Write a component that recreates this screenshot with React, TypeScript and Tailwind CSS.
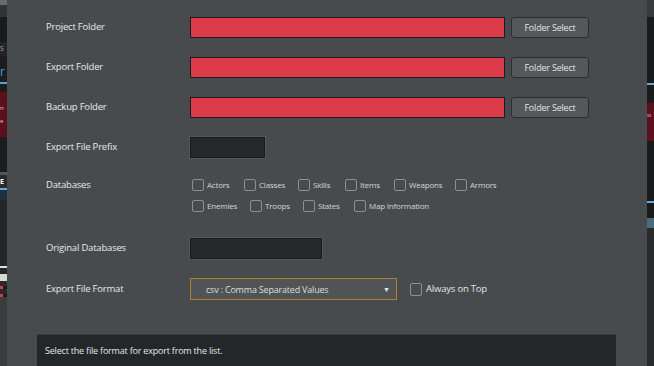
import React from "react";

const font = { fontFamily: '"Open Sans", "Noto Sans", sans-serif' };

function Checkbox({ label, w }: { label: string; w: string }) {
  return (
    <div className={`flex items-center ${w}`}>
      <span className="w-[12px] h-[12px] rounded-[2px] border border-[#8d9093] shrink-0" />
      <span className="ml-[3px] text-[8px] leading-none text-[#d4d4d4] tracking-[-0.2px]">{label}</span>
    </div>
  );
}

function Label({ children }: { children: React.ReactNode }) {
  return <div className="w-[144px] shrink-0 text-[9.5px] leading-[14px] text-[#e8e8e8] tracking-[-0.2px]">{children}</div>;
}

function FolderRow({ label }: { label: string }) {
  return (
    <div className="h-[40px] flex items-center">
      <Label>{label}</Label>
      <div className="w-[315px] h-[21px] bg-[#dd3a4a] border border-[#1c1c1c]" />
      <button className="ml-[6px] w-[78px] h-[21px] rounded-[3px] bg-[#55585b] border border-[#2a2c2e] text-[9px] text-[#e2e2e2] tracking-[-0.2px] leading-none">
        Folder Select
      </button>
    </div>
  );
}

export default function App() {
  return (
    <div className="w-[654px] h-[366px] flex overflow-hidden bg-[#1b1b1b]" style={font}>
      {/* left background strip */}
      <div className="w-[7px] shrink-0 flex flex-col bg-[#1c1c1c] overflow-hidden">
        <div className="h-[5px] bg-[#6b6b6b]" />
        <div className="h-[12px] bg-[#333]" />
        <div className="h-[25px] bg-[#1a1a1a]" />
        <div className="h-[14px] bg-[#242424] text-[7px] leading-[14px] text-[#aaa]">S</div>
        <div className="h-[6px] bg-[#1c1c1c]" />
        <div className="h-[20px] bg-[#1c1c1c] text-[12px] leading-[20px] text-[#3aa0e8]">r</div>
        <div className="h-[2px] bg-[#5a9fd0]" />
        <div className="h-[8px] bg-[#1c1c1c]" />
        <div className="h-[45px] bg-[#5c0f1c] text-[6px] leading-[13px] text-[#e0c8c8] pt-[10px]">n<br />e</div>
        <div className="h-[35px] bg-[#1c1c1c]" />
        <div className="h-[3px] bg-[#555]" />
        <div className="h-[13px] bg-[#2a2a2a] text-[7px] leading-[13px] text-white font-bold">E</div>
        <div className="h-[2px] bg-[#6aa8d8]" />
        <div className="h-[10px] bg-[#203040]" />
        <div className="h-[66px] bg-[#262626]" />
        <div className="h-[2px] bg-[#ddd]" />
        <div className="h-[6px] bg-[#262626]" />
        <div className="h-[7px] bg-[#d8d8d8]" />
        <div className="h-[5px] bg-[#2a2a2a]" />
        <div className="h-[3px] bg-[#d43a4a] w-[3px]" />
        <div className="h-[5px] bg-[#2a2a2a]" />
        <div className="h-[3px] bg-[#d43a4a] w-[3px]" />
        <div className="flex-1 bg-[#3c3c3c]" />
      </div>

      {/* dialog */}
      <div className="flex-1 bg-[#484b4e] flex flex-col pt-[7px]">
        <div className="pl-[39px] flex flex-col">
          <FolderRow label="Project Folder" />
          <FolderRow label="Export Folder" />
          <FolderRow label="Backup Folder" />
          <div className="h-[40px] flex items-center">
            <Label>Export File Prefix</Label>
            <div className="w-[75px] h-[21px] bg-[#26282b] border border-[#1a1a1a] outline outline-1 outline-[#55585b]" />
          </div>
          <div className="h-[61px] flex items-start pt-[11px]">
            <Label>Databases</Label>
            <div className="flex flex-col gap-[7px] pl-[2px]">
              <div className="flex items-center h-[14px]">
                <Checkbox label="Actors" w="w-[52px]" />
                <Checkbox label="Classes" w="w-[54px]" />
                <Checkbox label="Skills" w="w-[47px]" />
                <Checkbox label="Items" w="w-[49px]" />
                <Checkbox label="Weapons" w="w-[61px]" />
                <Checkbox label="Armors" w="w-[50px]" />
              </div>
              <div className="flex items-center h-[14px]">
                <Checkbox label="Enemies" w="w-[58px]" />
                <Checkbox label="Troops" w="w-[53px]" />
                <Checkbox label="States" w="w-[51px]" />
                <Checkbox label="Map Information" w="w-[90px]" />
              </div>
            </div>
          </div>
          <div className="h-[40px] flex items-center">
            <Label>Original Databases</Label>
            <div className="w-[132px] h-[21px] bg-[#26282b] border border-[#1a1a1a] outline outline-1 outline-[#55585b]" />
          </div>
          <div className="h-[42px] flex items-center">
            <Label>Export File Format</Label>
            <div className="w-[207px] h-[22px] bg-[#515457] border border-[#b08030] flex items-center pl-[15px] pr-[6px]">
              <span className="flex-1 text-[9px] text-[#dcdcdc] tracking-[-0.2px] leading-none">csv : Comma Separated Values</span>
              <span className="text-[7px] text-[#e8e8e8] leading-none">▼</span>
            </div>
            <div className="ml-[13px] flex items-center">
              <span className="w-[12px] h-[13px] rounded-[2px] border border-[#8d9093]" />
              <span className="ml-[4px] text-[9.5px] text-[#e4e4e4] tracking-[-0.2px] leading-none">Always on Top</span>
            </div>
          </div>
        </div>
        <div className="mt-[24px] ml-[30px] w-[579px] flex-1 bg-[#24272a] border-t border-[#3a3d40] pl-[8px] pt-[10px] text-[9px] leading-[12px] text-[#e6e6e6] tracking-[-0.2px]">
          Select the file format for export from the list.
        </div>
      </div>

      {/* right background strip */}
      <div className="w-[7px] shrink-0 flex flex-col bg-[#1a1a1a] overflow-hidden">
        <div className="h-[17px] bg-[#3a3a3a]" />
        <div className="h-[66px] bg-[#1a1a1a]" />
        <div className="h-[2px] bg-[#6aa8d8]" />
        <div className="h-[18px] bg-[#1a1a1a]" />
        <div className="h-[38px] bg-[#5c0f1c] text-[5px] leading-[13px] text-[#e0c8c8] pt-[6px]">st</div>
        <div className="h-[60px] bg-[#1a1a1a]" />
        <div className="h-[2px] bg-[#6aa8d8]" />
        <div className="h-[15px] bg-[#1a1a1a]" />
        <div className="h-[10px] bg-[#4a6a80]" />
        <div className="flex-1 bg-[#2a2a2a]" />
      </div>
    </div>
  );
}
